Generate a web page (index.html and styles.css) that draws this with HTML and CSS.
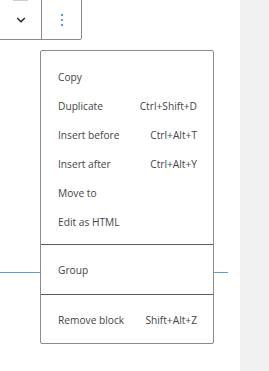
FILE: index.html
```html
<!DOCTYPE html>
<html lang="en">
<head>
    <meta charset="UTF-8">
    <title>Block options</title>
    <link rel="stylesheet" href="styles.css">
</head>
<body>

    <div class="canvas">
        <div class="top-mark"></div>

        <!-- toolbar of the selected block -->
        <div class="toolbar">
            <button class="tool tool-move" aria-label="Move down">
                <svg width="10" height="6" viewBox="0 0 10 6"><path d="M1.2 1 L5 4.8 L8.8 1" fill="none" stroke="#1e1e1e" stroke-width="1.3"/></svg>
            </button>
            <button class="tool tool-more" aria-label="Options">
                <svg width="4" height="14" viewBox="0 0 4 14"><circle cx="2" cy="2" r="1.1" fill="#3582c4"/><circle cx="2" cy="7" r="1.1" fill="#3582c4"/><circle cx="2" cy="12" r="1.1" fill="#3582c4"/></svg>
            </button>
        </div>

        <div class="insert-line"></div>

        <!-- options menu -->
        <div class="menu">
            <div class="menu-group first">
                <div class="menu-item"><span>Copy</span></div>
                <div class="menu-item"><span>Duplicate</span><span class="shortcut">Ctrl+Shift+D</span></div>
                <div class="menu-item"><span>Insert before</span><span class="shortcut">Ctrl+Alt+T</span></div>
                <div class="menu-item"><span>Insert after</span><span class="shortcut">Ctrl+Alt+Y</span></div>
                <div class="menu-item"><span>Move to</span></div>
                <div class="menu-item"><span>Edit as HTML</span></div>
            </div>
            <div class="menu-group">
                <div class="menu-item"><span>Group</span></div>
            </div>
            <div class="menu-group last">
                <div class="menu-item"><span>Remove block</span><span class="shortcut">Shift+Alt+Z</span></div>
            </div>
        </div>
    </div>

    <div class="sidebar"></div>

</body>
</html>
```

FILE: styles.css
```css
body {
    margin: 0;
    display: flex;
    height: 371px;
    overflow: hidden;
    background-color: #fff;
    font-family: 'Open Sans', 'Noto Sans', sans-serif;
    font-size: 10.2px;
    color: #444;
}
.canvas {
    flex: 0 0 240px;
    position: relative;
}
.sidebar {
    flex: 1;
    background-color: #f0f0f0;
}
/* faint leftover of the block above */
.top-mark {
    position: absolute;
    top: 0;
    left: 13px;
    width: 15px;
    height: 1px;
    background-color: #c3d2dc;
}
.toolbar {
    display: flex;
    box-sizing: border-box;
    width: 84px;
    height: 42px;
    margin: -2px 0 0 -2px;
    border: 1px solid #8a8a8a;
    border-radius: 2px;
    background-color: #fff;
}
.tool {
    display: flex;
    align-items: center;
    justify-content: center;
    padding: 0;
    border: none;
    background: none;
}
.tool-move {
    box-sizing: border-box;
    width: 43px;
    padding: 2px 0 0 2px;
    border-right: 1px solid #8a8a8a;
}
.tool-more {
    flex: 1;
    padding-top: 2px;
}
.insert-line {
    width: 228px;
    height: 1px;
    margin-top: 232px;
    background-color: #5aa0d4;
}
.menu {
    position: absolute;
    top: 50px;
    left: 40px;
    box-sizing: border-box;
    width: 174px;
    border: 1px solid #8c8c8c;
    border-radius: 2px;
    background-color: #fff;
}
.menu-group {
    padding: 10px 0;
    border-top: 1px solid #5e5e5e;
}
.menu-group.first {
    padding: 11px 0 8px;
    border-top: none;
}
.menu-group.last {
    padding: 10px 0 9px;
}
.menu-item {
    display: flex;
    justify-content: space-between;
    align-items: center;
    height: 29px;
    padding: 0 16px 0 17px;
}
```
